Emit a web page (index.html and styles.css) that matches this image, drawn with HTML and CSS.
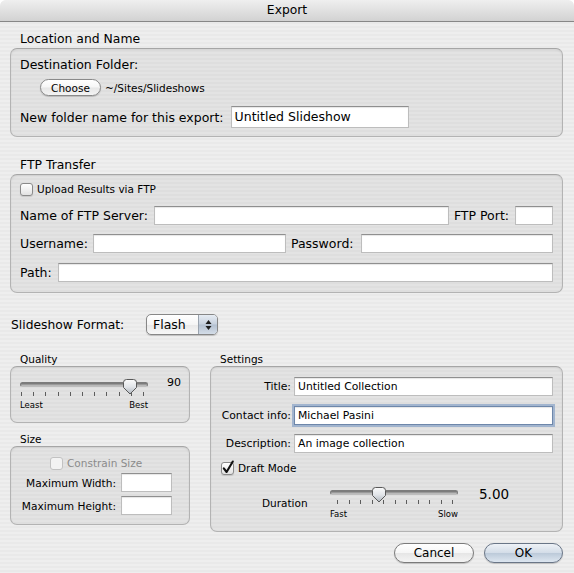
FILE: index.html
```html
<!DOCTYPE html>
<html>
<head>
<meta charset="utf-8">
<title>Export</title>
<link rel="stylesheet" href="styles.css">
</head>
<body>
<div class="window">
  <div class="titlebar">Export</div>
  <div class="content">

    <section class="group loc">
      <div class="group-label">Location and Name</div>
      <div class="box loc-box">
        <div class="line">Destination Folder:</div>
        <div class="choose-row">
          <span class="btn btn-small">Choose</span>
          <span class="path-text">~/Sites/Slideshows</span>
        </div>
        <div class="folder-row">
          <span>New folder name for this export:</span>
          <span class="field folder-field">Untitled Slideshow</span>
        </div>
      </div>
    </section>

    <section class="group ftp">
      <div class="group-label">FTP Transfer</div>
      <div class="box ftp-box">
        <div class="check-row">
          <span class="checkbox"></span>
          <span class="small">Upload Results via FTP</span>
        </div>
        <div class="form-row r-server">
          <span>Name of FTP Server:</span>
          <span class="field grow"></span>
          <span class="lbl-gap">FTP Port:</span>
          <span class="field port"></span>
        </div>
        <div class="form-row r-user">
          <span>Username:</span>
          <span class="field user"></span>
          <span class="lbl-gap">Password:</span>
          <span class="field grow"></span>
        </div>
        <div class="form-row r-path">
          <span>Path:</span>
          <span class="field grow"></span>
        </div>
      </div>
    </section>

    <div class="format-row">
      <span class="format-label">Slideshow Format:</span>
      <div class="popup">
        <span class="popup-value">Flash</span>
        <span class="popup-arrows">
          <svg width="7" height="12" viewBox="0 0 7 12"><path d="M3.5 1 L6.5 5 H0.5 Z M0.5 7 H6.5 L3.5 11 Z" fill="#1e1e1e"/></svg>
        </span>
      </div>
    </div>

    <div class="lower">
      <div class="left-col">
        <section class="group quality">
          <div class="group-label mini-label">Quality</div>
          <div class="box quality-box">
            <div class="slider">
              <div class="track"></div>
              <div class="ticks q-ticks"><i></i><i></i><i></i><i></i><i></i><i></i><i></i><i></i><i></i><i></i><i></i></div>
              <div class="slider-labels"><span>Least</span><span>Best</span></div>
              <svg class="thumb q-thumb" width="14" height="16" viewBox="0 0 14 16"><defs><linearGradient id="tg1" x1="0" y1="0" x2="0" y2="1"><stop offset="0" stop-color="#fbfbfb"/><stop offset="0.5" stop-color="#e2e5e9"/><stop offset="1" stop-color="#aeb5bd"/></linearGradient></defs><path d="M3.5 0.5 H10.5 Q13.5 0.5 13.5 3.5 V8.5 L7 15 L0.5 8.5 V3.5 Q0.5 0.5 3.5 0.5 Z" fill="url(#tg1)" stroke="#595959"/></svg>
            </div>
            <span class="q-value">90</span>
          </div>
        </section>

        <section class="group size">
          <div class="group-label mini-label">Size</div>
          <div class="box size-box">
            <div class="check-row constrain">
              <span class="checkbox disabled"></span>
              <span class="small grey">Constrain Size</span>
            </div>
            <div class="size-row first">
              <span>Maximum Width:</span>
              <span class="field size-field"></span>
            </div>
            <div class="size-row">
              <span>Maximum Height:</span>
              <span class="field size-field"></span>
            </div>
          </div>
        </section>
      </div>

      <div class="right-col">
        <section class="group settings">
          <div class="group-label mini-label">Settings</div>
          <div class="box settings-box">
            <div class="set-row">
              <span class="set-label">Title:</span>
              <span class="field grow">Untitled Collection</span>
            </div>
            <div class="set-row r2">
              <span class="set-label">Contact info:</span>
              <span class="field grow focused">Michael Pasini</span>
            </div>
            <div class="set-row r3">
              <span class="set-label">Description:</span>
              <span class="field grow">An image collection</span>
            </div>
            <div class="check-row draft">
              <span class="checkbox checked"><svg width="13" height="13" viewBox="0 0 13 13"><path d="M2.8 6.3 L5.6 10 L11.8 -0.5" fill="none" stroke="#111" stroke-width="2.1" stroke-linecap="round" stroke-linejoin="round"/></svg></span>
              <span class="small">Draft Mode</span>
            </div>
            <div class="duration-row">
              <span class="dur-label">Duration</span>
              <div class="slider dur-slider">
                <div class="track"></div>
                <div class="ticks d-ticks"><i></i><i></i><i></i><i></i><i></i><i></i><i></i><i></i><i></i><i></i><i></i></div>
                <div class="slider-labels"><span>Fast</span><span>Slow</span></div>
                <svg class="thumb d-thumb" width="14" height="16" viewBox="0 0 14 16"><defs><linearGradient id="tg2" x1="0" y1="0" x2="0" y2="1"><stop offset="0" stop-color="#fbfbfb"/><stop offset="0.5" stop-color="#e2e5e9"/><stop offset="1" stop-color="#aeb5bd"/></linearGradient></defs><path d="M3.5 0.5 H10.5 Q13.5 0.5 13.5 3.5 V8.5 L7 15 L0.5 8.5 V3.5 Q0.5 0.5 3.5 0.5 Z" fill="url(#tg2)" stroke="#595959"/></svg>
              </div>
              <span class="d-value">5.00</span>
            </div>
          </div>
        </section>
      </div>
    </div>

    <div class="buttons">
      <span class="btn btn-push">Cancel</span>
      <span class="btn btn-push btn-default">OK</span>
    </div>

  </div>
</div>
</body>
</html>
```

FILE: styles.css
```css
* { box-sizing: border-box; }

html, body {
  margin: 0;
  padding: 0;
  background: #ffffff;
}

body {
  font-family: "DejaVu Sans", "Liberation Sans", sans-serif;
  font-size: 12.5px;
  color: #000;
}

.window {
  width: 574px;
  height: 573px;
  overflow: hidden;
  border-radius: 6px 6px 0 0;
  background: repeating-linear-gradient(180deg, #eeeeee 0, #eeeeee 2px, #e9e9e9 2px, #e9e9e9 4px);
}

.titlebar {
  height: 22px;
  line-height: 21px;
  text-align: center;
  font-size: 12.3px;
  border-bottom: 1px solid #878787;
  background: linear-gradient(180deg, #efefef 0%, #e2e2e2 45%, #d2d2d2 100%);
  border-radius: 6px 6px 0 0;
}

.content {
  padding: 0 11px 0 10px;
}

.group-label {
  height: 16px;
  line-height: 16px;
  padding-left: 10px;
  font-size: 12.4px;
}

.mini-label {
  height: 14px;
  line-height: 14px;
  font-size: 10.5px;
}

.box {
  border: 1px solid #b3b3b3;
  border-top-color: #a6a6a6;
  border-radius: 7px;
  background: rgba(0, 0, 0, 0.045);
  box-shadow: inset 0 1px 2px rgba(0, 0, 0, 0.07);
}

.field {
  display: block;
  background: #ffffff;
  border: 1px solid #bdbdbd;
  border-top-color: #8f8f8f;
  box-shadow: inset 0 1px 1px rgba(0, 0, 0, 0.10);
  white-space: nowrap;
  overflow: hidden;
}

.grow { flex: 1; }

.small { font-size: 10.5px; }
.grey { color: #8b8b8b; }

/* ---------- Location ---------- */
.group.loc { margin-top: 9px; }
.loc-box {
  margin-top: 1px;
  height: 89px;
  padding: 8px 9px;
}
.line {
  height: 16px;
  line-height: 16px;
}
.choose-row {
  margin-top: 6px;
  height: 17px;
  display: flex;
  align-items: center;
}
.btn {
  display: flex;
  align-items: center;
  justify-content: center;
  border: 1px solid #8a8a8a;
  background: linear-gradient(180deg, #ffffff 0%, #f6f6f6 48%, #e6e6e6 52%, #f4f4f4 100%);
  box-shadow: 0 1px 1px rgba(0, 0, 0, 0.18);
}
.btn-small {
  margin-left: 20px;
  width: 61px;
  height: 17px;
  border-radius: 9px;
  font-size: 10.5px;
}
.path-text {
  margin-left: 4px;
  font-size: 10.5px;
}
.folder-row {
  margin-top: 10px;
  height: 22px;
  display: flex;
  align-items: center;
}
.folder-field {
  margin-left: 7px;
  width: 178px;
  height: 22px;
  line-height: 20px;
  padding-left: 3px;
}

/* ---------- FTP ---------- */
.group.ftp { margin-top: 20px; }
.ftp-box {
  margin-top: 1px;
  height: 119px;
  padding: 7px 9px 0 9px;
}
.check-row {
  height: 14px;
  display: flex;
  align-items: center;
}
.checkbox {
  display: block;
  width: 13px;
  height: 13px;
  border: 1px solid #8a8a8a;
  border-radius: 3px;
  background: linear-gradient(180deg, #ffffff 0%, #f1f1f1 50%, #e2e2e2 100%);
  box-shadow: 0 1px 1px rgba(0, 0, 0, 0.12);
  margin-right: 4px;
  flex: none;
}
.checkbox svg { display: block; overflow: visible; margin: -1px 0 0 -1px; }
.checkbox.disabled {
  border-color: #c2c2c2;
  background: #f3f3f3;
  box-shadow: none;
}
.form-row {
  height: 19px;
  display: flex;
  align-items: center;
}
.form-row .field {
  height: 19px;
  margin-left: 6px;
}
.r-server { margin-top: 10px; }
.r-user { margin-top: 9px; }
.r-path { margin-top: 10px; }
.lbl-gap { margin-left: 5px; }
.form-row .port { width: 38px; margin-left: 6px; }
.form-row .user { width: 193px; margin-left: 5px; }
.r-user .grow { margin-left: 7px; }

/* ---------- Format ---------- */
.format-row {
  margin-top: 21px;
  height: 21px;
  display: flex;
  align-items: center;
  padding-left: 1px;
}
.format-label {
  width: 135px;
  font-size: 12.3px;
}
.popup {
  width: 72px;
  height: 21px;
  display: flex;
  border: 1px solid #878787;
  border-radius: 5px;
  overflow: hidden;
  background: linear-gradient(180deg, #ffffff 0%, #f5f5f5 50%, #e8e8e8 52%, #f7f7f7 100%);
  box-shadow: 0 1px 1px rgba(0, 0, 0, 0.18);
}
.popup-value {
  flex: 1;
  line-height: 19px;
  padding-left: 6px;
  font-size: 12.5px;
}
.popup-arrows {
  width: 19px;
  display: flex;
  align-items: center;
  justify-content: center;
  border-left: 1px solid #9aa3ae;
  background: linear-gradient(180deg, #e6ecf3 0%, #c7d1de 48%, #b3c0d0 52%, #d4dde8 100%);
}
.popup-arrows svg { display: block; }

/* ---------- Lower ---------- */
.lower {
  margin-top: 17px;
  display: flex;
  gap: 20px;
}
.left-col { width: 180px; }
.right-col { flex: 1; }

.quality-box {
  height: 57px;
  display: flex;
  align-items: flex-start;
  padding: 8px 0 0 9px;
}
.slider {
  position: relative;
  width: 128px;
  margin-top: 5px;
}
.track {
  margin-top: 2px;
  height: 5px;
  border-radius: 3px;
  background: linear-gradient(180deg, #6d6d6d 0%, #9a9a9a 50%, #c9c9c9 100%);
  border: 1px solid #7c7c7c;
  border-bottom-color: #bdbdbd;
}
.ticks {
  margin-top: 5px;
  height: 5px;
  display: flex;
  justify-content: space-between;
}
.ticks i {
  display: block;
  width: 1px;
  height: 4px;
  background: #5c5c5c;
}
.q-ticks { padding: 0 4px 0 1px; }
.d-ticks { padding: 0 5px 0 7px; }
.slider-labels {
  margin-top: 2px;
  height: 12px;
  line-height: 12px;
  display: flex;
  justify-content: space-between;
  font-size: 8.5px;
}
.q-value {
  margin-left: 19px;
  line-height: 16px;
  font-size: 11px;
}
.thumb {
  position: absolute;
  top: -1px;
  display: block;
}
.q-thumb { left: 103px; }
.d-thumb { left: 42px; }

.group.size { margin-top: 9px; }
.size-box {
  height: 79px;
  padding-top: 9px;
}
.constrain {
  padding-left: 39px;
}
.size-row {
  height: 19px;
  margin-top: 4px;
  display: flex;
  align-items: center;
  justify-content: flex-end;
  padding-right: 17px;
  font-size: 10.6px;
}
.size-row.first { margin-top: 3px; }
.size-field {
  width: 51px;
  height: 19px;
  margin-left: 5px;
}

.settings-box {
  height: 166px;
  padding: 10px 9px 0 10px;
}
.set-row {
  height: 19px;
  display: flex;
  align-items: center;
  font-size: 10.8px;
}
.set-row.r2 { margin-top: 10px; }
.set-row.r3 { margin-top: 9px; }
.set-label {
  width: 70px;
  text-align: right;
}
.set-row .field {
  height: 19px;
  line-height: 17px;
  margin-left: 3px;
  padding-left: 3px;
}
.field.focused {
  border-color: #6e87aa;
  box-shadow: 0 0 0 2px rgba(128, 156, 196, 0.65), inset 0 1px 1px rgba(0, 0, 0, 0.10);
}
.check-row.draft { margin-top: 8px; }
.duration-row {
  margin-top: 11px;
  display: flex;
  align-items: flex-start;
}
.dur-label {
  margin-left: 41px;
  width: 68px;
  margin-top: 9px;
  line-height: 16px;
  font-size: 10.5px;
}
.dur-slider { margin-top: 2px; }
.dur-slider .slider-labels { margin-top: 3px; }
.d-value {
  margin-left: 21px;
  line-height: 16px;
  font-size: 13.5px;
}

/* ---------- Buttons ---------- */
.buttons {
  margin-top: 11px;
  display: flex;
  justify-content: flex-end;
  gap: 10px;
}
.btn-push {
  height: 20px;
  width: 80px;
  border-radius: 10px;
  border-color: #7b7b7b;
  font-size: 12px;
}
.btn-default {
  width: 79px;
  border-color: #6a7687;
  background: linear-gradient(180deg, #eef2f7 0%, #d4dde8 48%, #bccad9 52%, #dde6f0 100%);
}
```
